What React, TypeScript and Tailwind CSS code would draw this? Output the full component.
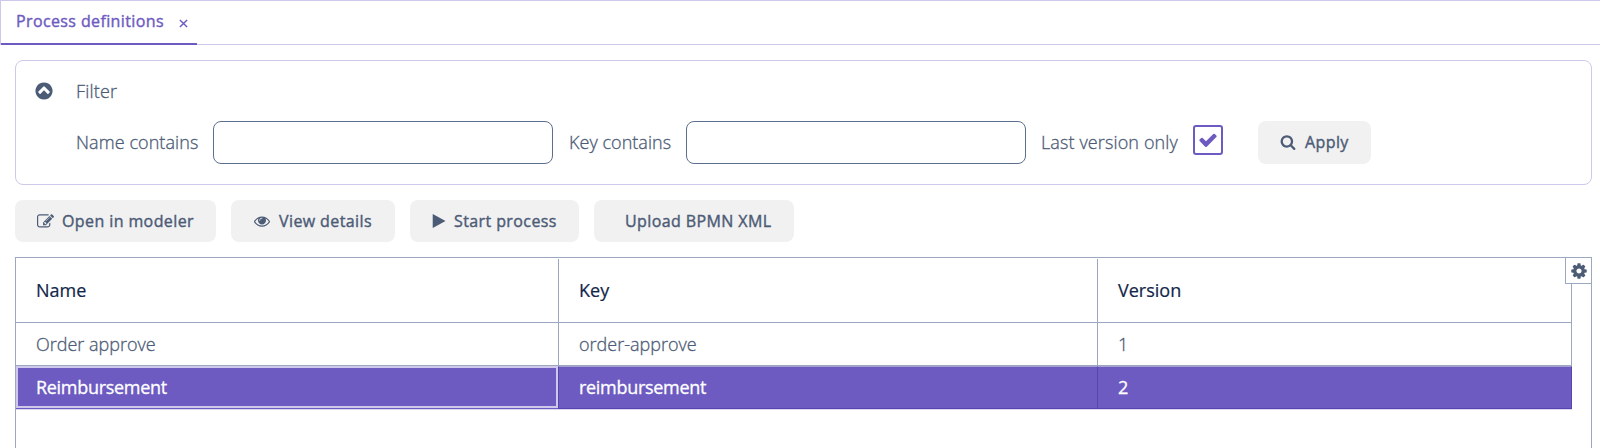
import React from "react";

const paths = {
  search:
    "M1216 832q0-185-131.5-316.5t-316.5-131.5-316.5 131.5-131.5 316.5 131.5 316.5 316.5 131.5 316.5-131.5 131.5-316.5zm512 832q0 52-38 90t-90 38q-54 0-90-38l-343-342q-179 124-399 124-143 0-273.5-55.5t-225-150-150-225-55.5-273.5 55.5-273.5 150-225 225-150 273.5-55.5 273.5 55.5 225 150 150 225 55.5 273.5q0 220-124 399l343 343q37 37 37 90z",
  eye: "M1664 960q-152-236-381-353 61 104 61 225 0 185-131.5 316.5t-316.5 131.5-316.5-131.5-131.5-316.5q0-121 61-225-229 117-381 353 133 205 333.5 326.5t434.5 121.5 434.5-121.5 333.5-326.5zm-720-384q0-20-14-34t-34-14q-125 0-214.5 89.5t-89.5 214.5q0 20 14 34t34 14 34-14 14-34q0-86 61-147t147-61q20 0 34-14t14-34zm848 384q0 34-20 69-140 230-376.5 368.5t-499.5 138.5-499.5-139-376.5-368q-20-35-20-69t20-69q140-229 376.5-368t499.5-139 499.5 139 376.5 368q20 35 20 69z",
  edit: "M888 1184l116-116-152-152-116 116v56h96v96h56zm440-720q-16-16-33 1l-350 350q-17 17-1 33t33-1l350-350q17-17 1-33zm80 594v190q0 119-84.5 203.5t-203.5 84.5h-832q-119 0-203.5-84.5t-84.5-203.5v-832q0-119 84.5-203.5t203.5-84.5h832q63 0 117 25 15 7 18 23 3 17-9 29l-49 49q-14 14-32 8-23-6-45-6h-832q-66 0-113 47t-47 113v832q0 66 47 113t113 47h832q66 0 113-47t47-113v-126q0-13 9-22l64-64q15-15 35-7t20 29zm-96-738l288 288-672 672h-288v-288zm444 132l-92 92-288-288 92-92q28-28 68-28t68 28l152 152q28 28 28 68t-28 68z",
  play: "M1576 927l-1328 738q-23 13-39.5 3t-16.5-36v-1472q0-26 16.5-36t39.5 3l1328 738q23 13 23 31t-23 31z",
  check:
    "M1671 566q0 40-28 68l-724 724-136 136q-28 28-68 28t-68-28l-136-136-362-362q-28-28-28-68t28-68l136-136q28-28 68-28t68 28l294 295 656-657q28-28 68-28t68 28l136 136q28 28 28 68z",
  cog: "M1152 896q0-106-75-181t-181-75-181 75-75 181 75 181 181 75 181-75 75-181zm512-109v222q0 12-8 23t-20 13l-185 28q-19 54-39 91 35 50 107 138 10 12 10 25t-9 23q-27 37-99 108t-94 71q-12 0-26-9l-138-108q-44 23-91 38-16 136-29 186-7 28-36 28h-222q-14 0-24.5-8.5t-11.5-21.5l-28-184q-49-16-90-37l-141 107q-10 9-25 9-14 0-25-11-126-114-165-168-7-10-7-23 0-12 8-23 15-21 51-66.5t54-70.5q-27-50-41-99l-183-27q-13-2-21-12.5t-8-23.5v-222q0-12 8-23t19-13l186-28q14-46 39-92-40-57-107-138-10-12-10-24 0-10 9-23 26-36 98.5-107.5t94.5-71.5q13 0 26 10l138 107q44-23 91-38 16-136 29-186 7-28 36-28h222q14 0 24.5 8.5t11.5 21.5l28 184q49 16 90 37l142-107q9-9 24-9 13 0 25 10 129 119 165 170 7 8 7 22 0 12-8 23-15 21-51 66.5t-54 70.5q26 50 41 98l183 28q13 2 21 12.5t8 23.5z",
  up: "M1293 1139l102-102q19-19 19-45t-19-45l-454-454q-19-19-45-19t-45 19l-454 454q-19 19-19 45t19 45l102 102q19 19 45 19t45-19l307-307 307 307q19 19 45 19t45-19zm371-243q0 209-103 385.5t-279.5 279.5-385.5 103-385.5-103-279.5-279.5-103-385.5 103-385.5 279.5-279.5 385.5-103 385.5 103 279.5 279.5 103 385.5z",
};

function Icon({ name, className }: { name: keyof typeof paths; className: string }) {
  return (
    <svg viewBox="0 0 1792 1792" fill="currentColor" className={`shrink-0 ${className}`} aria-hidden="true">
      <path d={paths[name]} />
    </svg>
  );
}

function ActionButton({ icon, label, className }: { icon?: React.ReactNode; label: string; className: string }) {
  return (
    <button className={`flex shrink-0 items-center rounded-[8px] bg-[#f1f1f1] text-[16px] font-normal text-[#4c5b76] [-webkit-text-stroke:0.4px_currentColor] ${className}`}>
      {icon}
      <span className="tracking-[0.4px] whitespace-nowrap">{label}</span>
    </button>
  );
}

export default function App() {
  return (
    <div className="flex h-[448px] w-full flex-col overflow-hidden bg-white font-['Open_Sans',sans-serif] text-[#4c5b76]">
      <header className="flex h-[45px] shrink-0 border-t border-b border-l border-[#cfc8ea]">
        <div className="-mb-px flex h-[44px] w-[196px] items-start border-b-2 border-[#6d5bc1] pl-[15px] text-[16px] text-[#6d5bc1]">
          <span className="w-[163px] pt-[8px] leading-[24px] tracking-[0.38px] whitespace-nowrap [-webkit-text-stroke:0.4px_currentColor]">Process definitions</span>
          <svg viewBox="0 0 10 10" className="mt-[18px] h-[9px] w-[9px]" stroke="currentColor" strokeWidth="1.6" fill="none">
            <path d="M1 1l8 8M9 1l-8 8" />
          </svg>
        </div>
      </header>

      <section className="mt-[15px] ml-[15px] flex h-[125px] w-[1577px] shrink-0 flex-col rounded-[8px] border border-[#cfc8ea] text-[18px] font-light">
        <div className="mt-[18px] flex h-[24px] items-center pl-[18px]">
          <Icon name="up" className="h-[20px] w-[20px]" />
          <span className="ml-[22px] tracking-[0.2px] [-webkit-text-stroke:0.3px_currentColor]">Filter</span>
        </div>
        <div className="mt-[18px] flex h-[43px] items-center pl-[60px]">
          <label className="w-[137px] tracking-[0.08px] whitespace-nowrap [-webkit-text-stroke:0.3px_currentColor]">Name contains</label>
          <input className="h-[43px] w-[340px] rounded-[8px] border border-[#5d6f91] bg-white" />
          <label className="ml-[16px] w-[117px] tracking-[0.04px] whitespace-nowrap [-webkit-text-stroke:0.3px_currentColor]">Key contains</label>
          <input className="h-[43px] w-[340px] rounded-[8px] border border-[#5d6f91] bg-white" />
          <label className="ml-[15px] w-[152px] tracking-[0.12px] whitespace-nowrap [-webkit-text-stroke:0.3px_currentColor]">Last version only</label>
          <span className="mb-[5px] flex h-[30px] w-[30px] items-center justify-center rounded-[3px] border-2 border-[#6d5bc1] text-[#6d5bc1]">
            <Icon name="check" className="h-[20px] w-[20px]" />
          </span>
          <ActionButton label="Apply" className="ml-[35px] h-[43px] w-[113px] pb-px pl-[22px]" icon={<Icon name="search" className="mr-[9px] h-[16px] w-[16px]" />} />
        </div>
      </section>

      <nav className="mt-[15px] ml-[15px] flex h-[42px] shrink-0 gap-[15px]">
        <ActionButton label="Open in modeler" className="w-[201px] pl-[22px]" icon={<Icon name="edit" className="mr-[8px] h-[17px] w-[17px]" />} />
        <ActionButton label="View details" className="w-[164px] pl-[23px]" icon={<Icon name="eye" className="mr-[9px] h-[16px] w-[16px]" />} />
        <ActionButton label="Start process" className="w-[169px] pl-[21px]" icon={<Icon name="play" className="mr-[7px] h-[16px] w-[16px]" />} />
        <ActionButton label="Upload BPMN XML" className="w-[200px] pl-[31px]" />
      </nav>

      <main className="relative mt-[15px] ml-[15px] h-[220px] w-[1577px] shrink-0 border-t border-r border-l border-[#9ba8c0] text-[18px]">
        <div className="flex h-[65px] w-[1556px] border-r border-b border-[#9ba8c0] pt-px text-[#12264a] [-webkit-text-stroke:0.2px_currentColor]">
          <div className="flex w-[543px] items-center border-r border-[#9ba8c0] pl-[20px]">Name</div>
          <div className="flex w-[539px] items-center border-r border-[#9ba8c0] pl-[20px]">Key</div>
          <div className="flex items-center pl-[20px]">Version</div>
        </div>
        <div className="flex h-[43px] w-[1556px] border-r border-b border-[#9ba8c0] font-light [-webkit-text-stroke:0.3px_currentColor]">
          <div className="flex w-[543px] items-center border-r border-[#9ba8c0] pl-[20px]">Order approve</div>
          <div className="flex w-[539px] items-center border-r border-[#9ba8c0] pl-[20px]">order-approve</div>
          <div className="flex items-center pl-[20px]">1</div>
        </div>
        <div className="flex h-[44px] w-[1556px] border-b border-[#dcd7f0] tracking-[-0.3px] text-white [-webkit-text-stroke:0.3px_currentColor]">
          <div className="flex w-[542px] border-b border-[#6d5bc1]">
            <div className="flex w-full items-center border-2 border-[#cfc8ea] bg-[#6d5bc1] pl-[18px]">Reimbursement</div>
          </div>
          <div className="flex w-[540px] items-center border-t border-r border-b border-l border-t-[#a89fd0] border-r-[#5a45b0] border-b-[#5a45b0] border-l-[#5a45b0] bg-[#6d5bc1] pl-[20px]">reimbursement</div>
          <div className="flex flex-1 items-center border-t border-r border-b border-t-[#a89fd0] border-r-[#5a45b0] border-b-[#5a45b0] bg-[#6d5bc1] pl-[20px]">2</div>
        </div>
        <button className="absolute -top-px -right-px flex h-[27px] w-[27px] items-center justify-center border border-[#9ba8c0] bg-white text-[#4c5b76]">
          <Icon name="cog" className="h-[18px] w-[18px]" />
        </button>
      </main>
    </div>
  );
}
